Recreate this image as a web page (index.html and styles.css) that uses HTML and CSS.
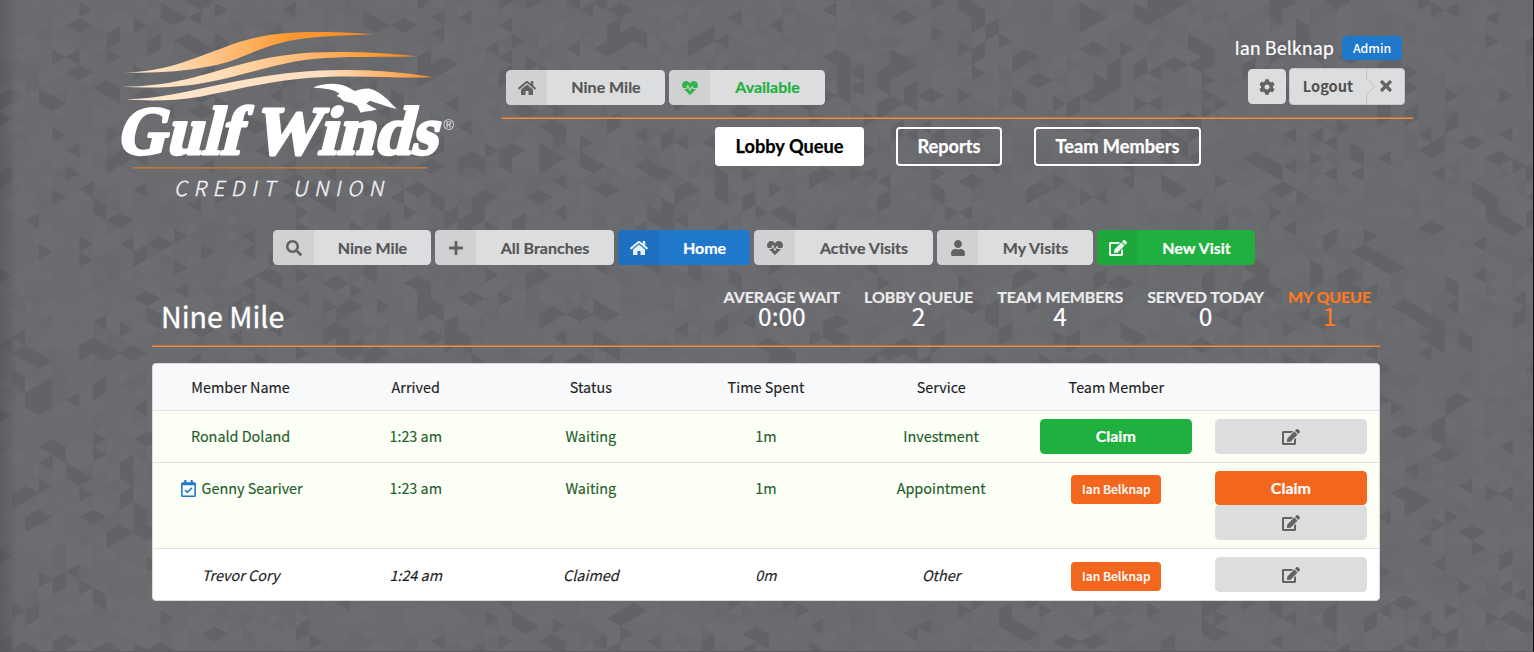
FILE: index.html
```html
<!DOCTYPE html>
<html lang="en">
<head>
<meta charset="utf-8">
<title>Lobby Queue</title>
<link rel="stylesheet" href="styles.css">
</head>
<body>
<svg class="mosaic" id="mosaic" width="1534" height="652" aria-hidden="true"></svg>
<svg class="sprite" aria-hidden="true">
  <symbol id="home" viewBox="0 0 576 512"><path d="M280.37 148.26L96 300.11V464a16 16 0 0 0 16 16l112.06-.29a16 16 0 0 0 15.92-16V368a16 16 0 0 1 16-16h64a16 16 0 0 1 16 16v95.64a16 16 0 0 0 16 16.05L464 480a16 16 0 0 0 16-16V300L295.67 148.26a12.19 12.19 0 0 0-15.3 0zM571.6 251.47L488 182.56V44.05a12 12 0 0 0-12-12h-56a12 12 0 0 0-12 12v72.61L318.47 43a48 48 0 0 0-61 0L4.34 251.47a12 12 0 0 0-1.6 16.9l25.5 31A12 12 0 0 0 45.15 301l235.22-193.74a12.19 12.19 0 0 1 15.3 0L530.9 301a12 12 0 0 0 16.9-1.6l25.5-31a12 12 0 0 0-1.7-16.93z"/></symbol>
  <symbol id="search" viewBox="0 0 512 512"><path d="M505 442.7L405.3 343c-4.5-4.5-10.6-7-17-7H372c27.6-35.3 44-79.7 44-128C416 93.1 322.9 0 208 0S0 93.1 0 208s93.1 208 208 208c48.3 0 92.7-16.4 128-44v16.3c0 6.4 2.5 12.5 7 17l99.7 99.7c9.4 9.4 24.6 9.4 33.9 0l28.3-28.3c9.4-9.4 9.4-24.6.1-34zM208 336c-70.7 0-128-57.2-128-128 0-70.7 57.2-128 128-128 70.7 0 128 57.2 128 128 0 70.7-57.2 128-128 128z"/></symbol>
  <symbol id="pulse" viewBox="0 0 512 512"><path d="M320.2 243.8l-49.7 99.4c-6 12.1-23.4 11.7-28.9-.6l-56.9-126.3-30 71.7H60.6l182.5 186.5c7.1 7.3 18.6 7.3 25.7 0L451.4 288H342.3l-22.1-44.2zM473.7 73.9l-2.4-2.5c-51.5-52.6-135.8-52.6-187.4 0L256 100l-27.9-28.5c-51.5-52.7-135.9-52.7-187.4 0l-2.4 2.4C-10.4 123.7-12.5 203 31 256h102.4l35.9-86.2c5.4-12.9 23.6-13.2 29.4-.4l58.2 129.3 49-97.9c5.9-11.8 22.7-11.8 28.6 0l27.6 55.2H481c43.5-53 41.4-132.3-7.3-182.1z"/></symbol>
  <symbol id="user" viewBox="0 0 448 512"><path d="M224 256c70.7 0 128-57.3 128-128S294.7 0 224 0 96 57.3 96 128s57.3 128 128 128zm89.6 32h-16.7c-22.2 10.2-46.9 16-72.9 16s-50.6-5.8-72.9-16h-16.7C60.2 288 0 348.2 0 422.4V464c0 26.5 21.5 48 48 48h352c26.5 0 48-21.5 48-48v-41.6c0-74.2-60.2-134.4-134.4-134.4z"/></symbol>
  <symbol id="plus" viewBox="0 0 448 512"><path d="M416 208H272V64c0-17.67-14.33-32-32-32h-32c-17.67 0-32 14.33-32 32v144H32c-17.67 0-32 14.33-32 32v32c0 17.67 14.33 32 32 32h144v144c0 17.67 14.33 32 32 32h32c17.67 0 32-14.33 32-32V304h144c17.67 0 32-14.33 32-32v-32c0-17.67-14.33-32-32-32z"/></symbol>
  <symbol id="edit" viewBox="0 0 576 512"><path d="M402.6 83.2l90.2 90.2c3.8 3.8 3.8 10 0 13.8L274.4 405.6l-92.8 10.3c-12.4 1.4-22.9-9.1-21.5-21.5l10.3-92.8L388.8 83.2c3.8-3.8 10-3.8 13.8 0zm162-22.9l-48.8-48.8c-15.2-15.2-39.9-15.2-55.2 0l-35.4 35.4c-3.8 3.8-3.8 10 0 13.8l90.2 90.2c3.8 3.8 10 3.8 13.8 0l35.4-35.4c15.2-15.3 15.2-40 0-55.2zM384 346.2V448H64V128h229.8c3.2 0 6.2-1.3 8.5-3.5l40-40c7.6-7.6 2.2-20.5-8.5-20.5H48C21.5 64 0 85.5 0 112v352c0 26.5 21.5 48 48 48h352c26.5 0 48-21.5 48-48V306.2c0-10.7-12.9-16-20.5-8.5l-40 40c-2.2 2.3-3.5 5.3-3.5 8.5z"/></symbol>
  <symbol id="cog" viewBox="0 0 512 512"><path d="M487.4 315.7l-42.6-24.6c4.3-23.2 4.3-47 0-70.2l42.6-24.6c4.9-2.8 7.1-8.6 5.5-14-11.1-35.6-30-67.8-54.7-94.6-3.8-4.1-10-5.1-14.8-2.3L380.8 110c-17.9-15.4-38.5-27.3-60.8-35.1V25.8c0-5.6-3.9-10.5-9.4-11.7-36.7-8.2-74.3-7.8-109.2 0-5.5 1.2-9.4 6.1-9.4 11.7V75c-22.2 7.9-42.8 19.8-60.8 35.1L88.7 85.5c-4.9-2.8-11-1.9-14.8 2.3-24.7 26.7-43.6 58.9-54.7 94.6-1.7 5.4.6 11.2 5.5 14L67.3 221c-4.3 23.2-4.3 47 0 70.2l-42.6 24.6c-4.9 2.8-7.1 8.6-5.5 14 11.1 35.6 30 67.8 54.7 94.6 3.8 4.1 10 5.1 14.8 2.3l42.6-24.6c17.9 15.4 38.5 27.3 60.8 35.1v49.2c0 5.6 3.9 10.5 9.4 11.7 36.7 8.2 74.3 7.8 109.2 0 5.5-1.2 9.4-6.1 9.4-11.7v-49.2c22.2-7.9 42.8-19.8 60.8-35.1l42.6 24.6c4.9 2.8 11 1.9 14.8-2.3 24.7-26.7 43.6-58.9 54.7-94.6 1.5-5.5-.7-11.3-5.6-14.1zM256 336c-44.1 0-80-35.9-80-80s35.9-80 80-80 80 35.9 80 80-35.9 80-80 80z"/></symbol>
  <symbol id="times" viewBox="0 0 352 512"><path d="M242.72 256l100.07-100.07c12.28-12.28 12.28-32.19 0-44.48l-22.24-22.24c-12.28-12.28-32.19-12.28-44.48 0L176 189.28 75.93 89.21c-12.28-12.28-32.19-12.28-44.48 0L9.21 111.45c-12.28 12.28-12.28 32.19 0 44.48L109.28 256 9.21 356.07c-12.28 12.28-12.28 32.19 0 44.48l22.24 22.24c12.28 12.28 32.2 12.28 44.48 0L176 322.72l100.07 100.07c12.28 12.28 32.2 12.28 44.48 0l22.24-22.24c12.28-12.28 12.28-32.19 0-44.48L242.72 256z" stroke="currentColor" stroke-width="20"/></symbol>
  <symbol id="calendar" viewBox="0 0 448 512"><path d="M400 64h-48V12c0-6.627-5.373-12-12-12h-40c-6.627 0-12 5.373-12 12v52H160V12c0-6.627-5.373-12-12-12h-40c-6.627 0-12 5.373-12 12v52H48C21.49 64 0 85.49 0 112v352c0 26.51 21.49 48 48 48h352c26.51 0 48-21.49 48-48V112c0-26.51-21.49-48-48-48zm-6 400H54a6 6 0 0 1-6-6V160h352v298a6 6 0 0 1-6 6z"/><path d="M118 300l72 72 140-140" fill="none" stroke="currentColor" stroke-width="46"/></symbol>
</svg>

<header class="header">
  <svg class="logo" viewBox="0 0 1080 570" role="img" aria-label="Gulf Winds Credit Union">
    <defs>
      <linearGradient id="w1" x1="0" x2="1"><stop offset="0" stop-color="#ffe6cd"/><stop offset=".2" stop-color="#ffdcb6"/><stop offset=".65" stop-color="#fd9a35"/><stop offset="1" stop-color="#f68b1f"/></linearGradient>
      <linearGradient id="w2" x1="0" x2="1"><stop offset="0" stop-color="#ffe6cd"/><stop offset=".35" stop-color="#ffdcb6"/><stop offset=".85" stop-color="#fd9a35"/><stop offset="1" stop-color="#f68b1f"/></linearGradient>
      <linearGradient id="w3" x1="0" x2="1"><stop offset="0" stop-color="#ffe6cd"/><stop offset=".65" stop-color="#ffdfbf"/><stop offset=".95" stop-color="#fb9a3a"/><stop offset="1" stop-color="#f68b1f"/></linearGradient>
    </defs>
    <path fill="url(#w1)" d="M38 157C170 155 240 118 340 83C440 44 520 36 620 36C700 36 750 40 792 43C700 48 590 46 500 72C410 98 390 122 300 139C210 156 120 161 38 157Z"/>
    <path fill="url(#w2)" d="M35 200C170 201 260 170 360 142C460 114 540 96 680 96C780 96 860 102 920 109C800 114 640 104 530 130C410 157 350 180 250 194C170 204 100 204 35 200Z"/>
    <path fill="url(#w3)" d="M48 238C150 236 220 216 320 196C440 170 560 150 700 150C820 150 900 160 968 172C860 176 740 163 600 173C480 182 380 210 270 230C190 243 110 244 48 238Z"/>
    <g class="logo-name">
      <text transform="translate(16 403) skewX(-14)" textLength="376" lengthAdjust="spacingAndGlyphs">Gulf</text>
      <text transform="translate(425 403) skewX(-14)" textLength="554" lengthAdjust="spacingAndGlyphs">Winds</text>
    </g>
    <path fill="#fff" d="M610 203C640 188 685 189 708 199C722 206 728 211 736 213C748 209 762 205 780 206C812 214 838 243 860 267C838 262 805 250 779 242L769 251L800 268C785 275 765 274 752 278L741 257L724 248C703 246 695 241 691 233L680 228L688 221C675 208 640 204 610 203Z"/>
    <rect x="68" y="441" width="884" height="5" fill="#b57a3c"/>
    <text class="logo-reg" x="1000" y="331">®</text>
    <text class="logo-sub" transform="translate(192 527) skewX(-12)" textLength="628" xml:space="preserve">CREDIT UNION</text>
  </svg>

  <div class="header-main">
    <div class="header-top">
      <div class="btn-row">
        <a class="btn icon-btn w159"><i><svg class="ico"><use href="#home"/></svg></i><span>Nine Mile</span></a>
        <a class="btn icon-btn w156 on"><i><svg class="ico"><use href="#pulse"/></svg></i><span>Available</span></a>
      </div>
      <div class="account">
        <div class="who"><span>Ian Belknap</span><b class="role">Admin</b></div>
        <div class="account-btns">
          <a class="btn square"><svg class="ico"><use href="#cog"/></svg></a>
          <a class="logout"><span class="logout-text">Logout</span><svg class="notch" viewBox="0 0 12 37"><path d="M.5 0V10L8.700 18.500L.5 27V37" fill="none" stroke="#bfc0c1"/></svg><svg class="ico x"><use href="#times"/></svg></a>
        </div>
      </div>
    </div>
    <nav class="tabs">
      <a class="tab active w149">Lobby Queue</a><a class="tab w106">Reports</a><a class="tab w167">Team Members</a>
    </nav>
  </div>
</header>

<div class="btn-row filters">
  <a class="btn icon-btn w158"><i><svg class="ico"><use href="#search"/></svg></i><span>Nine Mile</span></a>
  <a class="btn icon-btn w179"><i><svg class="ico"><use href="#plus"/></svg></i><span>All Branches</span></a>
  <a class="btn icon-btn w132 blue"><i><svg class="ico"><use href="#home"/></svg></i><span>Home</span></a>
  <a class="btn icon-btn w179"><i><svg class="ico"><use href="#pulse"/></svg></i><span>Active Visits</span></a>
  <a class="btn icon-btn w156"><i><svg class="ico"><use href="#user"/></svg></i><span>My Visits</span></a>
  <a class="btn icon-btn w158 green"><i><svg class="ico"><use href="#edit"/></svg></i><span>New Visit</span></a>
</div>

<main class="content">
  <div class="summary">
    <h1>Nine Mile</h1>
    <div class="stats">
      <div class="stat"><b>AVERAGE WAIT</b><span>0:00</span></div>
      <div class="stat"><b>LOBBY QUEUE</b><span>2</span></div>
      <div class="stat"><b>TEAM MEMBERS</b><span>4</span></div>
      <div class="stat"><b>SERVED TODAY</b><span>0</span></div>
      <div class="stat mine"><b>MY QUEUE</b><span>1</span></div>
    </div>
  </div>
  <div class="table">
    <div class="row head"><div>Member Name</div><div>Arrived</div><div>Status</div><div>Time Spent</div><div>Service</div><div>Team Member</div><div></div></div>
    <div class="row waiting"><div>Ronald Doland</div><div>1:23 am</div><div>Waiting</div><div>1m</div><div>Investment</div>
      <div class="action"><a class="btn fill green">Claim</a></div>
      <div class="action"><a class="btn fill"><svg class="ico"><use href="#edit"/></svg></a></div></div>
    <div class="row waiting tall"><div><svg class="ico cal"><use href="#calendar"/></svg>Genny Seariver</div><div>1:23 am</div><div>Waiting</div><div>1m</div><div>Appointment</div>
      <div><b class="tag">Ian Belknap</b></div>
      <div class="action"><a class="btn fill orange">Claim</a><a class="btn fill"><svg class="ico"><use href="#edit"/></svg></a></div></div>
    <div class="row claimed"><div>Trevor Cory</div><div>1:24 am</div><div>Claimed</div><div>0m</div><div>Other</div>
      <div><b class="tag">Ian Belknap</b></div>
      <div class="action"><a class="btn fill"><svg class="ico"><use href="#edit"/></svg></a></div></div>
  </div>
</main>
<script src="mosaic.js"></script>
</body>
</html>
```
FILE: styles.css
```css
* { box-sizing: border-box; }
body {
  margin: 0;
  width: 1534px;
  height: 652px;
  overflow: hidden;
  position: relative;
  background: #6a6b6f;
  color: #fff;
  font: 14.400px/20px "Noto Sans CJK SC", sans-serif;
}
body::after {
  content: "";
  position: absolute;
  inset: 0;
  z-index: -1;
  border-right: 1px solid #111;
  border-bottom: 1px solid #5e5d60;
  background: linear-gradient(90deg, rgba(40,40,44,.2), transparent 18px, transparent);
}
.mosaic { position: absolute; inset: 0; z-index: -1; }
.mosaic .dark { fill: #626367; }
.mosaic .mid { fill: #68696d; }
.mosaic .light { fill: #6c6d71; }
.sprite { position: absolute; width: 0; height: 0; }
.ico { width: 18px; height: 16px; fill: currentColor; display: block; opacity: .9; }

.header { display: flex; gap: 32px; height: 230px; padding: 20px 0 0 110px; }
.logo { width: 360px; height: 190px; flex: none; }
.logo-name { font: bold 206px "Liberation Serif", serif; fill: #fff; stroke: #fff; stroke-width: 9px; stroke-linejoin: round; }
.logo-reg { font: 44px "Liberation Sans", sans-serif; fill: #e9e9ea; }
.logo-sub { font: 300 62px "Noto Sans CJK SC", sans-serif; fill: #f2f2f2; stroke: #f2f2f2; stroke-width: 1.200px; }

.header-main { width: 911px; padding-top: 15px; }
.header-top { display: flex; justify-content: space-between; height: 84px; padding: 0 8px 0 4px; border-bottom: 1px solid #f08a42; box-shadow: inset 0 -1px #c07445; }
.header-top .btn-row { padding-top: 35px; }
.btn-row { display: flex; gap: 4px; }
.btn {
  display: flex; align-items: center; justify-content: center;
  height: 35px; border-radius: 4.500px; background: #dcddde; color: #565656;
  font: bold 16px/33px Lato, sans-serif; white-space: nowrap; overflow: hidden;
  -webkit-text-stroke: .2px currentColor;
}
.icon-btn i { display: flex; align-items: center; justify-content: center; width: 41px; height: 35px; background: rgba(0,0,0,.05); flex: none; }
.icon-btn span { flex: 1; text-align: center; padding: 0 0 1px; }
.header-top .icon-btn span { padding-bottom: 2px; }
.on { color: #21b040; }
.blue { background: #1f78cb; color: #fff; }
.green { background: #20b03f; color: #fff; }
.orange { background: #f2661d; color: #fff; }
.w132 { width: 132px; } .w156 { width: 156px; } .w158 { width: 158px; } .w159 { width: 159px; } .w179 { width: 179px; }
.w106 { width: 106px; } .w149 { width: 149px; } .w167 { width: 167px; }

.account { display: flex; flex-direction: column; align-items: flex-end; }
.who { display: flex; align-items: center; gap: 8px; height: 26px; padding-right: 3px; font-size: 18px; -webkit-text-stroke: .2px currentColor; }
.who > span { margin-top: -2px; }
.role { width: 60px; height: 24px; border-radius: 4px; background: #1f78cb; font-size: 12.300px; line-height: 24px; text-align: center; font-weight: 500; -webkit-text-stroke: 0; }
.account-btns { display: flex; align-items: center; gap: 3px; margin-top: 7px; }
.square { width: 38px; }
.logout { display: flex; align-items: center; width: 116px; height: 37px; border-radius: 4px; background: #dcddde; border: 1px solid #c6c7c8; color: #565656; }
.logout-text { width: 76px; margin-top: -2px; text-align: center; font: bold 14.600px/33px "Noto Sans CJK SC", sans-serif; color: #505050; }
.notch { width: 12px; height: 37px; margin: -1px 0; }
.x { margin: -1px 0 0 -1px; }

.tabs { display: flex; gap: 32px; padding: 8px 0 0 213px; }
.tab { height: 39px; border: 2px solid #fff; border-radius: 4px; text-align: center; font: bold 18.200px/35px Lato, sans-serif; white-space: nowrap; -webkit-text-stroke: .25px currentColor; }
.tab.active { background: #fff; color: #000; }

.filters { padding-left: 273px; }
.content { width: 1228px; margin: 23px 0 0 152px; }
.summary { display: flex; justify-content: space-between; height: 59px; padding: 0 9px; border-bottom: 1px solid #f08a42; box-shadow: inset 0 -1px #c07445; }
h1 { margin: 8px 0 0; font-size: 28.600px; line-height: 40px; font-weight: 400; -webkit-text-stroke: .3px currentColor; }
.stats { display: flex; gap: 24px; }
.stat { text-align: center; white-space: nowrap; }
.stat b { display: block; font: bold 16px/18px Lato, sans-serif; letter-spacing: -.1px; color: #ececec; -webkit-text-stroke: .2px currentColor; }
.stat span { display: block; font-size: 24.500px; line-height: 20px; -webkit-text-stroke: .2px currentColor; }
.stat.mine, .stat.mine b { color: #ff7a1a; }

.table { margin-top: 16px; border: 1px solid #d9dadc; border-radius: 4px; background: #fff; overflow: hidden; color: #1d1d1d; -webkit-text-stroke: .15px currentColor; }
.row { display: grid; grid-template-columns: repeat(7, 175.150px); height: 52px; padding-top: 8px; border-top: 1px solid #dfe1df; line-height: 33px; text-align: center; }
.head { height: 46px; padding-top: 6px; border-top: 0; background: #f8f9fb; }
.waiting { background: #fcfff5; color: #245c2a; }
.tall { height: 86px; }
.claimed { font-style: italic; line-height: 35px; }
.action { padding: 0 12px 0 11px; }
.green.fill, .orange.fill { padding-bottom: 2px; }
.orange.fill { height: 34px; }
.cal { display: inline-block; width: 15px; height: 17px; margin: -4px 6px 0 2px; vertical-align: middle; color: #1f78cb; opacity: 1; }
.tag { display: block; width: 90px; height: 29px; margin: 4px auto 0; border-radius: 4px; background: #f2661d; color: #fff; font: 500 12.100px/28px "Noto Sans CJK SC", sans-serif; }
.claimed .tag { margin-top: 5px; }
```
FILE: mosaic.js
```js
// Fills the backdrop with a mosaic of sideways equilateral triangles.
(function () {
  var W = 13.52, H = 15.6, seed = 90127;
  function rnd() {
    seed = (seed + 0x6D2B79F5) | 0;
    var t = Math.imul(seed ^ (seed >>> 15), 1 | seed);
    t = (t + Math.imul(t ^ (t >>> 7), 61 | t)) ^ t;
    return ((t ^ (t >>> 14)) >>> 0) / 4294967296;
  }
  var d = { dark: '', mid: '', light: '' }, last = [];
  for (var c = -1; c < 115; c++) {
    var x = c * W - 1.7, odd = Math.abs(c) % 2, col = [];
    for (var r = 0; r < 87; r++) {
      var y = (r - 1) * H / 2 + 2.2;
      var right = (r + odd) % 2 === 0;
      var v = rnd(), k = rnd();
      var tone = v < 0.14 ? 'dark' : v < 0.26 ? 'mid' : v < 0.55 ? 'light' : '';
      if (k < 0.18) tone = col[r - 1];
      else if (k < 0.48 && right) tone = last[r];
      col[r] = tone;
      if (!tone) continue;
      d[tone] += right
        ? 'M' + x + ' ' + (y - H / 2) + 'V' + (y + H / 2) + 'L' + (x + W) + ' ' + y + 'Z'
        : 'M' + (x + W) + ' ' + (y - H / 2) + 'V' + (y + H / 2) + 'L' + x + ' ' + y + 'Z';
    }
    last = col;
  }
  document.getElementById('mosaic').innerHTML = Object.keys(d).map(function (k) {
    return '<path class="' + k + '" d="' + d[k] + '"/>';
  }).join('');
})();
```
